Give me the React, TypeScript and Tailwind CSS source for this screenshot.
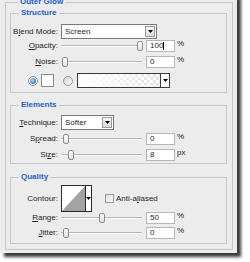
import React from 'react'

// Photoshop "Outer Glow" layer style panel (XP look)

function Legend({ children }: { children: React.ReactNode }) {
  return (
    <legend className="ml-[8px] px-[2px] text-[8px] leading-[10px] font-bold text-[#1a5fdc]">
      {children}
    </legend>
  )
}

function DropArrow() {
  return (
    <svg width="5" height="3" viewBox="0 0 5 3">
      <path d="M0 0h5L2.5 3z" fill="#000" />
    </svg>
  )
}

function DropBtn() {
  return (
    <div className="w-[10px] h-[11px] border border-[#9c9c9c] bg-[linear-gradient(#f6f6f6,#dcdcdc)] flex items-center justify-center">
      <DropArrow />
    </div>
  )
}

function Slider({ pos }: { pos: number }) {
  return (
    <div className="relative w-[81px] h-[12px] flex items-center">
      <div className="w-full h-[2px] border-t border-b border-t-[#b4b4b4] border-b-white" />
      <div
        className="absolute top-[1px] w-[6px] h-[10px] rounded-[2px] border border-[#8e8e8e] bg-[linear-gradient(#fdfdfd,#e2e2e2)]"
        style={{ left: pos }}
      />
    </div>
  )
}

function NumBox({ value, unit, caret }: { value: string; unit: string; caret?: boolean }) {
  return (
    <div className="ml-[4px] flex items-start">
      <div className="w-[29px] h-[12px] border border-[#b7b7b7] bg-white pl-[3px] flex items-center">
        <span>{value}</span>
        {caret && <span className="w-px h-[8px] bg-black" />}
      </div>
      <span className="ml-[2px] -mt-[1px]">{unit}</span>
    </div>
  )
}

function Row({ label, cls, children }: { label: React.ReactNode; cls: string; children: React.ReactNode }) {
  return (
    <div className={`flex items-center ${cls}`}>
      <div className="w-[47px] text-right whitespace-nowrap">{label}</div>
      <div className="ml-[3px] flex items-center">{children}</div>
    </div>
  )
}

export default function App() {
  return (
    <div className="w-[250px] h-[262px] overflow-hidden bg-white font-['Liberation_Sans',Arial,sans-serif] text-[8px] leading-[10px] text-[#1e1e1e]">
      <div className="-mt-[6px] w-[237px] h-[259px] bg-[#ececec] shadow-[4px_4px_3px_#3a3a3a] pl-[5px] pt-[3px]">
        <fieldset className="w-[228px] border border-[#c8c8c8] pl-[4px] pb-[5px]">
          <Legend>Outer Glow</Legend>

          {/* Structure */}
          <fieldset className="mt-[1px] w-[217px] border border-[#c8c8c8] pt-[6px] pb-[4px]">
            <Legend>Structure</Legend>
            <Row label={<>B<u>l</u>end Mode:</>} cls="h-[15px]">
              <div className="w-[96px] h-[15px] border border-[#7a7a7a] bg-white flex items-center justify-between pl-[3px] pr-[1px]">
                <span>Screen</span>
                <DropBtn />
              </div>
            </Row>
            <Row label={<><u>O</u>pacity:</>} cls="h-[13px]">
              <Slider pos={76} />
              <NumBox value="100" unit="%" caret />
            </Row>
            <Row label={<><u>N</u>oise:</>} cls="mt-[3px] h-[13px]">
              <Slider pos={1} />
              <NumBox value="0" unit="%" />
            </Row>
            <div className="mt-[5px] h-[15px] flex items-center">
              <div className="ml-[17px] w-[10px] h-[10px] rounded-full border border-[#8f8f8f] bg-white flex items-center justify-center">
                <div className="w-[6px] h-[6px] rounded-full bg-[radial-gradient(circle_at_40%_40%,#9fd8ff,#1458c0)]" />
              </div>
              <div className="ml-[3px] w-[13px] h-[13px] border border-[#8a8a8a] bg-white" />
              <div className="ml-[9px] w-[10px] h-[10px] rounded-full border border-[#9a9a9a] bg-[linear-gradient(135deg,#d4d4d4,#fbfbfb)]" />
              <div className="ml-[4px] w-[93px] h-[15px] border border-[#3a3a3a] flex">
                <div className="flex-1 bg-[linear-gradient(to_right,#ffffff,rgba(255,255,255,0)),repeating-conic-gradient(#e2e2e2_0_25%,#ffffff_0_50%)] [background-size:100%_100%,6px_6px]" />
                <div className="w-[9px] border-l border-[#3a3a3a] bg-white flex items-center justify-center">
                  <DropArrow />
                </div>
              </div>
            </div>
          </fieldset>

          {/* Elements */}
          <fieldset className="mt-[7px] w-[217px] border border-[#c8c8c8] pt-[5px] pb-[2px]">
            <Legend>Elements</Legend>
            <Row label={<><u>T</u>echnique:</>} cls="h-[15px]">
              <div className="w-[53px] h-[15px] border border-[#7a7a7a] bg-white flex items-center justify-between pl-[3px] pr-[1px]">
                <span>Softer</span>
                <DropBtn />
              </div>
            </Row>
            <Row label={<>S<u>p</u>read:</>} cls="mt-[2px] h-[13px]">
              <Slider pos={2} />
              <NumBox value="0" unit="%" />
            </Row>
            <Row label={<>Si<u>z</u>e:</>} cls="mt-[3px] h-[13px]">
              <Slider pos={7} />
              <NumBox value="8" unit="px" />
            </Row>
          </fieldset>

          {/* Quality */}
          <fieldset className="mt-[8px] w-[217px] border border-[#c8c8c8] pt-[3px] pb-[4px]">
            <Legend>Quality</Legend>
            <Row label="Contour:" cls="h-[27px]">
              <div className="w-[31px] h-[27px] border border-[#2a2a2a] bg-white flex">
                <svg width="23" height="25" viewBox="0 0 23 25" className="block">
                  <path d="M0 25L23 0V25Z" fill="#a3a3a3" />
                </svg>
                <div className="flex-1 border-l border-[#2a2a2a] flex items-center justify-center">
                  <DropArrow />
                </div>
              </div>
              <div className="ml-[13px] w-[9px] h-[9px] border border-[#9a9a9a] bg-[linear-gradient(135deg,#dcdcdc,#fafafa)]" />
              <span className="ml-[2px]">Anti-a<u>l</u>iased</span>
            </Row>
            <Row label={<><u>R</u>ange:</>} cls="h-[12px]">
              <Slider pos={38} />
              <NumBox value="50" unit="%" />
            </Row>
            <Row label={<><u>J</u>itter:</>} cls="mt-[3px] h-[12px]">
              <Slider pos={2} />
              <NumBox value="0" unit="%" />
            </Row>
          </fieldset>
        </fieldset>
      </div>
    </div>
  )
}
